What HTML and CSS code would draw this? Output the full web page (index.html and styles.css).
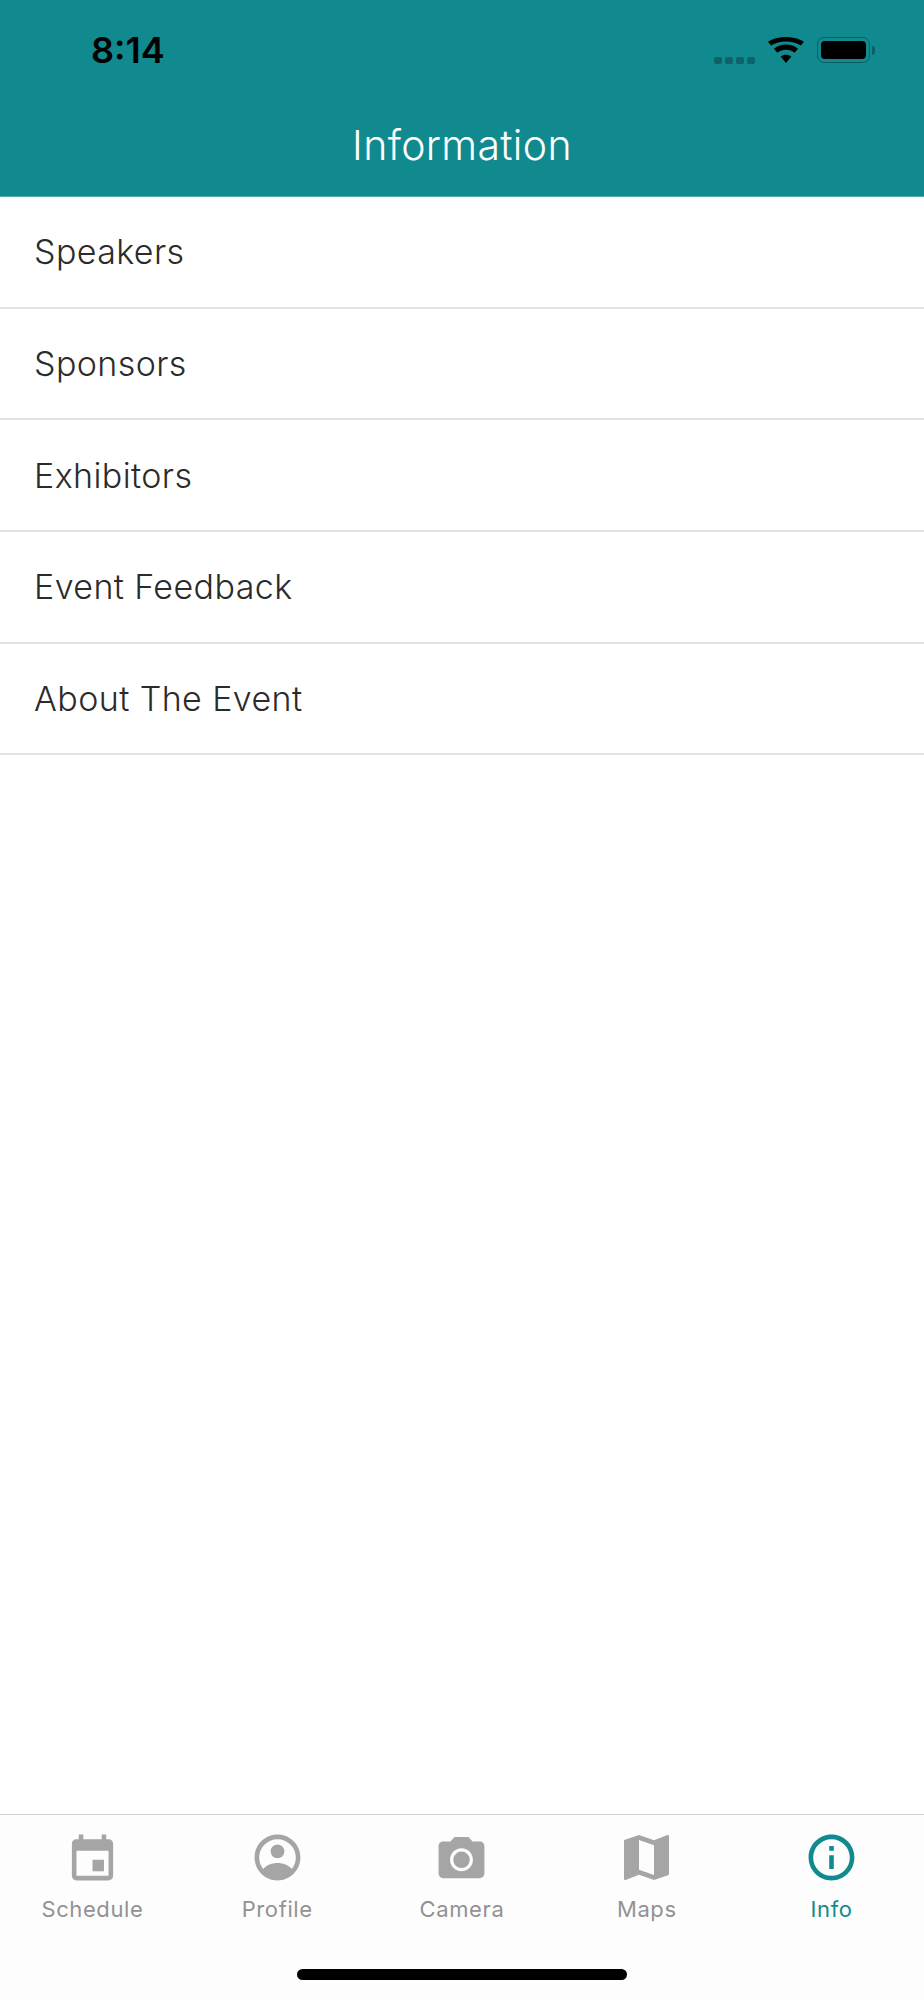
FILE: index.html
```html
<!DOCTYPE html>
<html lang="en">
<head>
    <meta charset="UTF-8">
    <meta name="viewport" content="width=device-width, initial-scale=1.0">
    <title>Information</title>
    <link rel="stylesheet" href="styles.css">
</head>
<body>

<div class="app">
    <header class="top-bar">
        <div class="status-bar">
            <span class="clock">8:14</span>
            <div class="status-icons">
                <div class="signal">
                    <span class="signal-dot"></span>
                    <span class="signal-dot"></span>
                    <span class="signal-dot"></span>
                    <span class="signal-dot"></span>
                </div>
                <svg class="wifi" viewBox="0 0 36 26" aria-hidden="true">
                    <path d="M18 26 L12.6 19.6 C15.8 17 20.2 17 23.4 19.6 Z"/>
                    <path d="M9.3 15.7 L6 11.8 C12.8 6.2 23.2 6.2 30 11.8 L26.7 15.7 C22 11.7 14 11.7 9.3 15.7 Z"/>
                    <path d="M3.2 8.5 L0 4.7 C10.2 -1.6 25.8 -1.6 36 4.7 L32.8 8.5 C24.6 3.2 11.4 3.2 3.2 8.5 Z"/>
                </svg>
                <div class="battery">
                    <div class="battery-body"><div class="battery-level"></div></div>
                    <div class="battery-nub"></div>
                </div>
            </div>
        </div>
        <h1 class="page-title">Information</h1>
    </header>

    <ul class="menu">
        <li class="menu-item">Speakers</li>
        <li class="menu-item">Sponsors</li>
        <li class="menu-item">Exhibitors</li>
        <li class="menu-item">Event Feedback</li>
        <li class="menu-item">About The Event</li>
    </ul>

    <footer class="tab-bar">
        <nav class="tabs">
            <div class="tab">
                <svg class="tab-icon" viewBox="0 -1 24 24"><path d="M17 12h-5v5h5v-5zM16 1v2H8V1H6v2H5c-1.11 0-1.99.9-1.99 2L3 19c0 1.1.89 2 2 2h14c1.1 0 2-.9 2-2V5c0-1.1-.9-2-2-2h-1V1h-2zm3 18H5V8h14v11z"/></svg>
                <span class="tab-label">Schedule</span>
            </div>
            <div class="tab">
                <svg class="tab-icon" viewBox="0 0 24 24"><path d="M12 2C6.48 2 2 6.48 2 12s4.48 10 10 10 10-4.48 10-10S17.52 2 12 2zm0 2c4.41 0 8 3.59 8 8 0 1.9-.67 3.65-1.78 5.02C16.8 15.3 14.4 14.4 12 14.4s-4.8.9-6.22 2.62C4.67 15.65 4 13.9 4 12c0-4.41 3.59-8 8-8z"/><circle cx="12" cy="9.3" r="3"/></svg>
                <span class="tab-label">Profile</span>
            </div>
            <div class="tab">
                <svg class="tab-icon" viewBox="0 -1 24 24"><circle cx="12" cy="12" r="3.6"/><path d="M9 2L7.17 4H4c-1.1 0-2 .9-2 2v12c0 1.1.9 2 2 2h16c1.1 0 2-.9 2-2V6c0-1.1-.9-2-2-2h-3.17L15 2H9zm3 15c-2.76 0-5-2.24-5-5s2.24-5 5-5 5 2.24 5 5-2.24 5-5 5z"/></svg>
                <span class="tab-label">Camera</span>
            </div>
            <div class="tab">
                <svg class="tab-icon" viewBox="1 1 22 22"><path d="M20.5 3l-.16.03L15 5.1 9 3 3.36 4.9c-.21.07-.36.25-.36.48V20.5c0 .28.22.5.5.5l.16-.03L9 18.9l6 2.1 5.64-1.9c.21-.07.36-.25.36-.48V3.5c0-.28-.22-.5-.5-.5zM15 19l-6-2.11V5l6 2.11V19z"/></svg>
                <span class="tab-label">Maps</span>
            </div>
            <div class="tab tab-active">
                <svg class="tab-icon" viewBox="0 0 24 24"><path d="M11 7h2v2h-2zm0 4h2v6h-2zm1-9C6.48 2 2 6.48 2 12s4.48 10 10 10 10-4.48 10-10S17.52 2 12 2zm0 18c-4.41 0-8-3.59-8-8s3.59-8 8-8 8 3.59 8 8-3.59 8-8 8z"/></svg>
                <span class="tab-label">Info</span>
            </div>
        </nav>
        <div class="home-indicator"></div>
    </footer>
</div>

</body>
</html>
```

FILE: styles.css
```css
* {
    box-sizing: border-box;
}
body {
    margin: 0;
    font-family: Inter, "Liberation Sans", sans-serif;
    background-color: #fff;
}
.app {
    display: flex;
    flex-direction: column;
    height: 2000px;
}
.top-bar {
    height: 197px;
    background-color: #118a8f;
    border-bottom: 1px solid #4fa9b0;
}
.status-bar {
    display: flex;
    justify-content: space-between;
    align-items: center;
    height: 100px;
    padding: 0 49px 0 91px;
}
.clock {
    font-size: 36px;
    font-weight: 600;
    color: #000;
}
.status-icons {
    display: flex;
    align-items: flex-start;
    height: 26px;
}
.signal {
    display: flex;
    gap: 3px;
    margin-top: 20px;
    margin-right: 13px;
}
.signal-dot {
    width: 8px;
    height: 7px;
    border-radius: 2px;
    background-color: #0d6367;
}
.wifi {
    width: 36px;
    height: 26px;
    fill: #000;
    margin-right: 13px;
}
.battery {
    display: flex;
    align-items: center;
}
.battery-body {
    width: 53px;
    height: 26px;
    padding: 3px;
    border: 1px solid #0d5f63;
    border-radius: 7px;
    background-color: #118a8f;
}
.battery-level {
    height: 100%;
    border-radius: 4px;
    background-color: #000;
}
.battery-nub {
    width: 3px;
    height: 9px;
    margin-left: 2px;
    border-radius: 0 3px 3px 0;
    background-color: #0d5f63;
}
.page-title {
    margin: 20px 0 0;
    text-align: center;
    font-size: 41px;
    font-weight: 350;
    letter-spacing: 0.35px;
    line-height: 50px;
    color: #fff;
}
.menu {
    list-style: none;
    margin: 0;
    padding: 0;
}
.menu-item {
    display: flex;
    align-items: center;
    height: 111.67px;
    padding-left: 34px;
    font-size: 34px;
    font-weight: 350;
    letter-spacing: 0.4px;
    color: #2b2b2b;
    border-bottom: 2px solid #e4e4e4;
}
.tab-bar {
    margin-top: auto;
    height: 186px;
    background-color: #fdfdfd;
    border-top: 1px solid #cfcfcf;
    display: flex;
    flex-direction: column;
}
.tabs {
    display: grid;
    grid-template-columns: repeat(5, 1fr);
    padding-top: 15px;
}
.tab {
    display: flex;
    flex-direction: column;
    align-items: center;
    color: #929292;
}
.tab-icon {
    width: 55px;
    height: 55px;
    fill: #a5a5a5;
}
.tab-label {
    margin-top: 11px;
    font-size: 22px;
    letter-spacing: 0.6px;
    line-height: 26px;
}
.tab-active {
    color: #118a8f;
}
.tab-active .tab-icon {
    fill: #118a8f;
}
.home-indicator {
    width: 330px;
    height: 11px;
    margin: 47px auto 0;
    border-radius: 6px;
    background-color: #000;
}
```
